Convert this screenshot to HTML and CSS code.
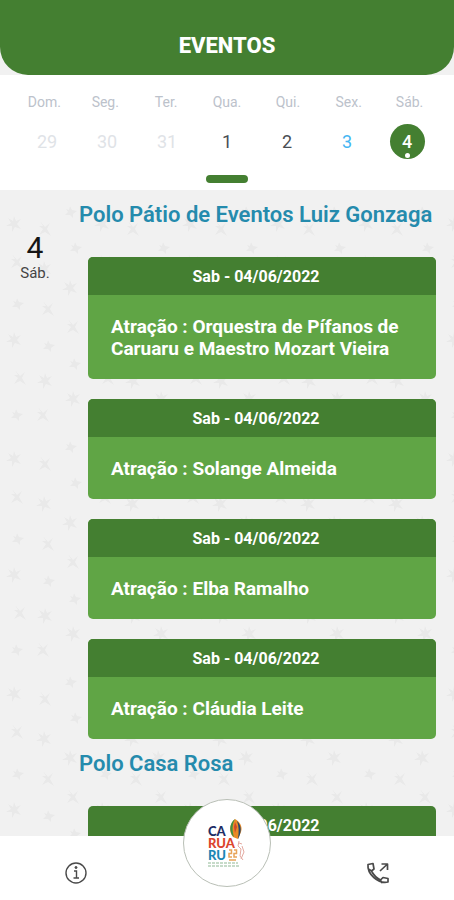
FILE: index.html
```
<!DOCTYPE html>
<html lang="pt-BR">
<head>
<meta charset="utf-8">
<meta name="viewport" content="width=device-width, initial-scale=1">
<title>Eventos</title>
<link rel="stylesheet" href="styles.css">
</head>
<body>
<header class="topbar"><h1>EVENTOS</h1></header>
<section class="calendar" aria-label="Calendário">
  <div class="weekdays">
    <span>Dom.</span><span>Seg.</span><span>Ter.</span><span>Qua.</span><span>Qui.</span><span>Sex.</span><span>Sáb.</span>
  </div>
  <div class="dates">
    <button class="date muted">29</button>
    <button class="date muted">30</button>
    <button class="date muted">31</button>
    <button class="date">1</button>
    <button class="date">2</button>
    <button class="date today">3</button>
    <button class="date selected">4</button>
  </div>
  <button class="knob" aria-label="Expandir calendário"></button>
</section>
<main class="agenda">
  <svg class="stars" aria-hidden="true">
    <defs>
      <g id="star-a"><path d="M0-8 2-3 7-5 3 0 7 5 1 3-2 8-2 2-8 2-3-1-6-6-1-3Z"/></g>
      <g id="star-b"><path d="M-5-8 0-2 5-6 2 0 6 7 0 3-6 6-2 0-6-3-2-3Z"/></g>
      <g id="star-c"><path d="M-1-6 1-2 6-1 2 2 2 6-1 3-6 3-3 0-5-3-2-2Z"/></g>
      <pattern id="stars" width="88" height="235" patternUnits="userSpaceOnUse">
        <use href="#star-a" x="14" y="34"/><use href="#star-b" x="45" y="39"/><use href="#star-c" x="71" y="22"/>
        <use href="#star-b" x="17" y="72"/><use href="#star-a" x="44" y="79"/><use href="#star-c" x="76" y="58"/>
        <use href="#star-c" x="18" y="114"/><use href="#star-b" x="48" y="119"/><use href="#star-a" x="70" y="98"/>
        <use href="#star-a" x="14" y="150"/><use href="#star-c" x="49" y="156"/><use href="#star-b" x="73" y="137"/>
        <use href="#star-b" x="20" y="188"/><use href="#star-a" x="45" y="191"/><use href="#star-c" x="75" y="174"/>
        <use href="#star-c" x="17" y="225"/><use href="#star-b" x="43" y="225"/><use href="#star-a" x="73" y="209"/>
      </pattern>
    </defs>
    <rect width="100%" height="100%" fill="url(#stars)"/>
  </svg>
  <div class="schedule">
    <div class="day"><strong>4</strong><span>Sáb.</span></div>
    <div class="stages">
      <section>
        <h2>Polo Pátio de Eventos Luiz Gonzaga</h2>
        <div class="cards">
          <article class="card"><time datetime="2022-06-04">Sab - 04/06/2022</time><h3>Atração : Orquestra de Pífanos de Caruaru e Maestro Mozart Vieira</h3></article>
          <article class="card"><time datetime="2022-06-04">Sab - 04/06/2022</time><h3>Atração : Solange Almeida</h3></article>
          <article class="card"><time datetime="2022-06-04">Sab - 04/06/2022</time><h3>Atração : Elba Ramalho</h3></article>
          <article class="card"><time datetime="2022-06-04">Sab - 04/06/2022</time><h3>Atração : Cláudia Leite</h3></article>
        </div>
      </section>
      <section>
        <h2>Polo Casa Rosa</h2>
        <div class="cards">
          <article class="card"><time datetime="2022-06-04">Sab - 04/06/2022</time></article>
        </div>
      </section>
    </div>
  </div>
</main>
<nav class="tabs">
  <button class="tab" aria-label="Informações">
    <svg width="24" height="24" viewBox="0 0 24 24" fill="none" stroke="#4a4a4a" stroke-width="1.4"><circle cx="12" cy="12" r="10"/><path d="M10 10h2.500v7M9.500 17h5.500"/><circle cx="12" cy="6.500" r="1" fill="#4a4a4a" stroke-width="1"/></svg>
  </button>
  <button class="home" aria-label="Caruaru">
    <svg class="logo" width="44" height="50" viewBox="0 0 44 50">
      <g class="logo-word">
        <text x="3" y="18" fill="#1d2e66">CA</text>
        <text x="3" y="30" fill="#dc452d">RUA</text>
        <text x="3" y="42" fill="#1c87b5">RU</text>
      </g>
      <path d="M30 1C34 3 38 8 36 14L33 21 28 19C23 13 25 5 30 1Z" fill="#e98a25"/>
      <path d="M30 1C27 6 27 13 29 19L27 17C24 11 25 5 30 1Z" fill="#3d9146"/>
      <path d="M32 3C36 7 37 12 34 19L33 21C34 14 34 8 32 3Z" fill="#20466f"/>
      <path d="M30 4 32 9 30 15 29 9Z" fill="#cf4630"/>
      <path d="M34 23 33 28 36 31 35 38 38 42M37 28 39 34 36 41M34 25 37 26" fill="none" stroke="#e4a9a0" stroke-width="1"/>
      <path d="M24 32h2.500v3.500H24V39h3M29 32h2.500v3.500H29V39h3M24 42h7" fill="none" stroke="#e8a458" stroke-width="1.500"/>
      <path d="M3 45h30M3 48h31" stroke="#8fb894" stroke-width="1" stroke-dasharray="3 1"/>
    </svg>
  </button>
  <button class="tab" aria-label="Telefones">
    <svg width="24" height="24" viewBox="0 0 24 24" fill="none" stroke="#4a4a4a" stroke-width="1.700" stroke-linejoin="round"><path d="M2 3.500 7 2.500 8 8 5.500 10C7.500 14 10.500 17 14.500 19L17 16.500 22 17.500V21C12 23 1 13 2 3.500ZM5.500 10 2.500 8M14.500 19 16 22M14 10 21.500 3M15.500 3H21.500V9"/></svg>
  </button>
</nav>
</body>
</html>
```
FILE: styles.css
```
* { box-sizing: border-box; }

body {
  margin: 0;
  height: 100vh;
  display: flex;
  flex-direction: column;
  overflow: hidden;
  background: #f1f1f1;
  font-family: Roboto, "Liberation Sans", sans-serif;
}

h1, h2, h3 { margin: 0; }

button {
  border: 0;
  padding: 0;
  background: none;
  font: inherit;
  color: inherit;
}

.topbar {
  flex: none;
  padding: 32px 16px 15px;
  border-radius: 0 0 28px 28px;
  background: #447f31;
  color: #fff;
  text-align: center;
}

.topbar h1 {
  font-size: 22px;
  line-height: 28px;
  font-weight: 800;
}

.calendar {
  flex: none;
  display: flex;
  flex-direction: column;
  padding: 18px 14px 7px;
  background: #fff;
}

.weekdays, .dates {
  display: grid;
  grid-template-columns: repeat(7, 1fr);
  justify-items: center;
}

.weekdays {
  font-size: 14px;
  line-height: 18px;
  color: #bcc2cb;
}

.dates {
  margin-top: 13px;
  padding: 0 3px;
}

.date {
  width: 35px;
  height: 35px;
  border-radius: 50%;
  font-size: 18px;
  color: #494e53;
}

.date.muted { color: #dfe3e7; }
.date.today { color: #45b6f2; }

.date.selected {
  display: grid;
  place-items: center;
  position: relative;
  background: #447f31;
  color: #fff;
  font-weight: 500;
}

.date.selected::after {
  content: "";
  position: absolute;
  bottom: 1px;
  width: 5px;
  height: 5px;
  border-radius: 50%;
  background: #fff;
}

.knob {
  align-self: center;
  width: 42px;
  height: 8px;
  margin-top: 16px;
  border-radius: 4px;
  background: #447f31;
}

.agenda {
  flex: 1;
  min-height: 0;
  display: grid;
  grid-template-columns: 1fr;
  grid-template-rows: 1fr;
  overflow: hidden;
}

.stars, .schedule { grid-area: 1 / 1; }

.stars {
  width: 100%;
  height: 100%;
  fill: #e9e9e9;
}

.schedule {
  min-height: 0;
  display: grid;
  grid-template-columns: 70px 1fr;
  gap: 9px;
  padding-right: 18px;
}

.day {
  display: flex;
  flex-direction: column;
  align-items: center;
  padding-top: 42px;
  color: #151515;
}

.day strong {
  font-size: 30px;
  line-height: 32px;
  font-weight: 400;
}

.day span {
  font-size: 15px;
  line-height: 18px;
  color: #444;
}

.stages h2 {
  padding: 13px 0 30px;
  font-size: 22px;
  line-height: 24px;
  font-weight: 600;
  color: #258bad;
  white-space: nowrap;
}

.cards {
  display: flex;
  flex-direction: column;
  gap: 20px;
  padding-left: 9px;
}

.card {
  overflow: hidden;
  border-radius: 5px;
  background: #60a545;
  color: #fff;
}

.card time {
  display: block;
  padding: 11px 24px 9px 12px;
  background: #447f31;
  font-size: 16px;
  line-height: 18px;
  font-weight: 700;
  text-align: center;
}

.card h3 {
  padding: 21px 23px 19px;
  font-size: 19px;
  line-height: 22px;
  font-weight: 700;
}

.tabs {
  flex: none;
  position: relative;
  display: grid;
  grid-template-columns: repeat(3, 1fr);
  place-items: center;
  padding-top: 10px;
  height: 64px;
  background: #fff;
}

.tab {
  display: grid;
  place-items: center;
  width: 44px;
  height: 44px;
}

.home {
  display: grid;
  place-items: center;
  width: 88px;
  height: 88px;
  margin-top: -60px;
  border: 1px solid #b9bfb6;
  border-radius: 50%;
  background: #fff;
}

.logo-word {
  font-family: Lato, sans-serif;
  font-size: 13px;
  font-weight: 900;
}
```
